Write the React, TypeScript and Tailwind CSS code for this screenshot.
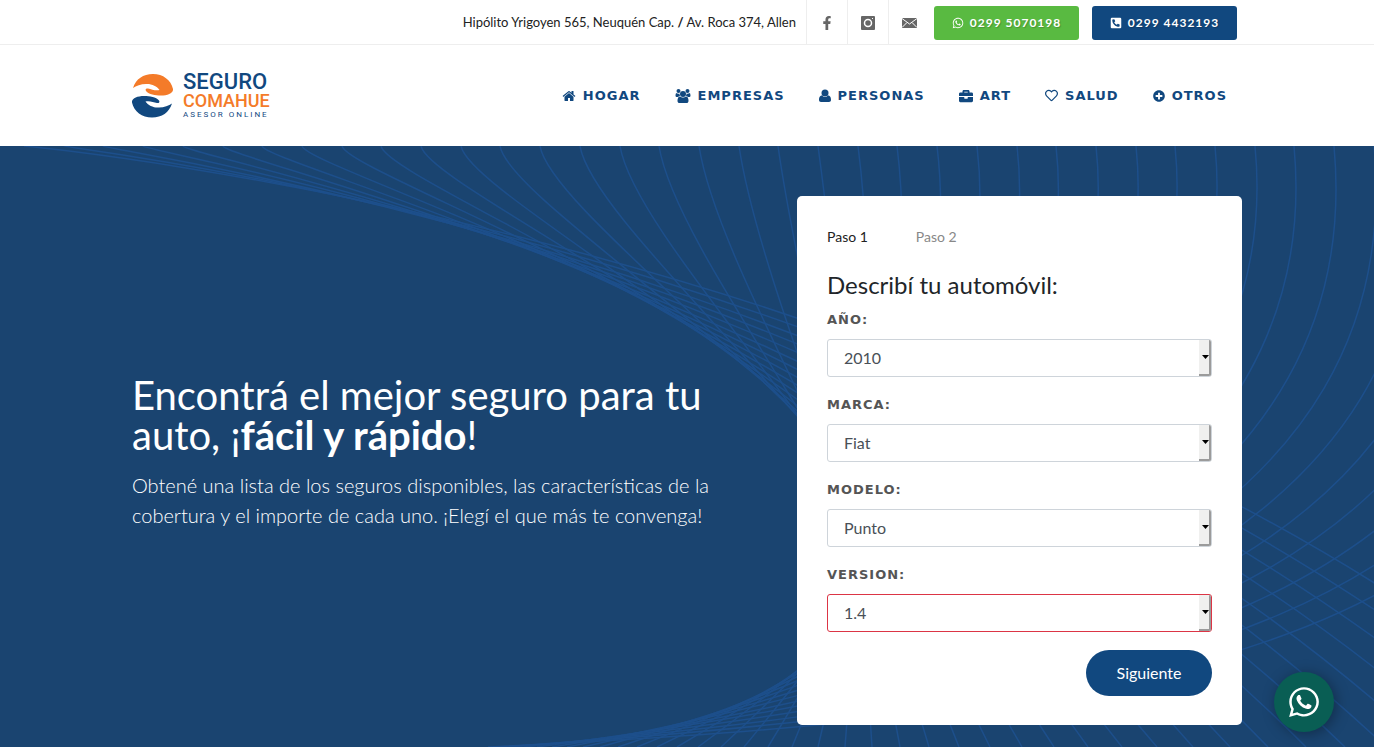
import { useState } from "react";
import type { ReactNode } from "react";
import { FaBriefcase, FaFacebookF, FaPhoneSquareAlt, FaPlusCircle, FaRegHeart, FaWhatsapp } from "react-icons/fa";

type Campo = "anio" | "marca" | "modelo" | "version";

type CampoProps = {
    id: Campo;
    label: string;
    value: string;
    opciones: string[];
    invalido?: boolean;
    onChange: (campo: Campo, valor: string) => void;
};

const OPCIONES: Record<Campo, string[]> = {
    anio: ["2010", "2011", "2012"],
    marca: ["Fiat", "Ford", "Renault"],
    modelo: ["Punto", "Palio", "Uno"],
    version: ["1.4", "1.6", "1.8"],
};

const CURVAS = Array.from({ length: 41 }, (_, i) => {
    const x = 24 + Math.round(39.7 * i);
    const y1 = Math.round(2 * i + 0.27 * i * i);
    const x2 = Math.round(1000 - 17.5 * i + 0.52 * i * i);
    const y2 = Math.round(89 + 16 * i - 0.1 * i * i);
    const x3 = Math.round(1600 - 45 * i + 0.43 * i * i);
    return `M${x} 0C${x + i} ${y1} ${x2} ${y2} ${x3} 601`;
});

function IconoHome() {
    return (
        <svg viewBox="0 0 1792 1792" className="h-[14px] w-[14px]" fill="currentColor" aria-hidden="true">
            <path d="M1472 992v480q0 26-19 45t-45 19h-384v-384h-256v384h-384q-26 0-45-19t-19-45v-480q0-1 .5-3t.5-3l575-474 575 474q1 2 1 6zm223-69l-62 74q-8 9-21 11h-3q-13 0-21-7l-692-577-692 577q-12 8-24 7-13-2-21-11l-62-74q-8-10-7-23.5t11-21.5l719-599q32-26 76-26t76 26l244 204v-195q0-14 9-23t23-9h192q14 0 23 9t9 23v408l219 182q10 8 11 21.5t-7 23.5z" />
        </svg>
    );
}

function IconoGrupo() {
    return (
        <svg viewBox="0 0 2048 1792" className="h-[14px] w-4" fill="currentColor" aria-hidden="true">
            <path d="M657 896q-162 5-265 128h-134q-82 0-138-40.5t-56-118.5q0-353 124-353 6 0 43.5 21t97.5 42.5 119 21.5q67 0 133-23-5 37-5 66 0 159 81 256z" />
            <path d="M1391 896q162 5 265 128h134q82 0 138-40.5t56-118.5q0-353-124-353-6 0-43.5 21t-97.5 42.5-119 21.5q-67 0-133-23 5 37 5 66 0 159-81 256z" />
            <path d="M1728 1533q0 120-73 189.5t-194 69.5h-874q-121 0-194-69.5t-73-189.5q0-53 3.5-103.5t14-109 26.5-108.5 43-97.5 62-81 85.5-53.5 111.5-20q10 0 43 21.5t73 48 107 48 135 21.5 135-21.5 107-48 73-48 43-21.5q61 0 111.5 20t85.5 53.5 62 81 43 97.5 26.5 108.5 14 109 3.5 103.5z" />
            <circle cx="448" cy="256" r="256" />
            <circle cx="1600" cy="256" r="256" />
            <circle cx="1024" cy="640" r="384" />
        </svg>
    );
}

// wider body than the stock user glyph
function IconoUsuario() {
    return (
        <svg viewBox="0 0 12 14" className="h-[14px] w-3" fill="currentColor" aria-hidden="true">
            <circle cx="6" cy="4" r="3.5" />
            <path d="M3 6.5Q6 9.5 9 6.5C11.5 6.5 12 9 12 11c0 1.3-.8 2-2 2H2c-1.2 0-2-.7-2-2 0-2 .5-4.5 3-4.5z" />
        </svg>
    );
}

function IconoInstagram() {
    return (
        <svg viewBox="0 0 14 14" className="h-[14px] w-[14px]" aria-hidden="true">
            <rect width="14" height="14" rx="1" fill="#666" />
            <circle cx="7" cy="7" r="3.5" fill="none" stroke="#fff" strokeWidth="1.5" />
            <rect x="11" y="2" width="1" height="1" fill="#fff" />
        </svg>
    );
}

function IconoMail() {
    return (
        <svg viewBox="0 0 15 10" className="h-[10px] w-[15px]" aria-hidden="true">
            <rect width="15" height="10" fill="#666" />
            <path d="M0 .5 7.5 6 15 .5M0 9.5 5 4.5M15 9.5 10 4.5" fill="none" stroke="#fff" strokeWidth="1" />
        </svg>
    );
}

const MENU: { nombre: string; icono: ReactNode }[] = [
    { nombre: "Hogar", icono: <IconoHome /> },
    { nombre: "Empresas", icono: <IconoGrupo /> },
    { nombre: "Personas", icono: <IconoUsuario /> },
    { nombre: "Art", icono: <FaBriefcase size={14} /> },
    { nombre: "Salud", icono: <FaRegHeart size={13} /> },
    { nombre: "Otros", icono: <FaPlusCircle size={12} /> },
];

function Logo() {
    return (
        <a href="#inicio" className="flex items-center gap-[10px]" aria-label="Seguro Comahue">
            <svg viewBox="0 0 41 44" className="h-11 w-[41px]" aria-hidden="true">
                <path
                    d="M1 14C4 5 11 0 21 0c10 0 18 6 20 15 .5 4-5 6.5-12 6.5-6 0-12-1-15-4.5-1-1.5 0-3 2-2.5 3.5 1 8 2.5 11.5 1.5C25 12 19 9.5 14 10 9 10 4 12 1 14z"
                    fill="#f47b29"
                />
                <path
                    d="M40 29.5C37 38.5 30 43.5 20 43.5 10 43.5 2 37.5 0 28.5-.5 24.5 5 22 12 22c6 0 12 1 15 4.5 1 1.5 0 3-2 2.5-3.5-1-8-2.5-11.5-1.5C16 31.5 22 34 27 33.5c5 0 10-2 13-4z"
                    fill="#11487f"
                />
            </svg>
            <span className="flex flex-col font-['Roboto'] font-medium">
                <span className="text-[22px] leading-[20px] text-[#11487f]">SEGURO</span>
                <span className="text-[18px] leading-[18px] text-[#f47b29]">COMAHUE</span>
                <span className="text-[8px] leading-[10px] font-normal tracking-[2px] text-[#11487f]">ASESOR ONLINE</span>
            </span>
        </a>
    );
}

function CampoSelect({ id, label, value, opciones, invalido = false, onChange }: CampoProps) {
    return (
        <div className="flex flex-col gap-[9px]">
            <label
                htmlFor={id}
                className="font-['DejaVu_Sans'] text-[13px] leading-5 font-bold tracking-[1px] text-[#555] uppercase"
            >
                {label}
            </label>
            <div className="relative">
                <select
                    id={id}
                    value={value}
                    onChange={(e) => onChange(id, e.target.value)}
                    className={
                        invalido
                            ? "block h-[38px] w-full appearance-none rounded-[3px] border border-[#dc3545] bg-white px-4 text-base text-[#495057]"
                            : "block h-[38px] w-full appearance-none rounded-[3px] border border-[#ced4da] bg-white px-4 text-base text-[#495057]"
                    }
                >
                    {opciones.map((opcion) => (
                        <option key={opcion} value={opcion}>
                            {opcion}
                        </option>
                    ))}
                </select>
                <span className="pointer-events-none absolute top-px right-px bottom-px flex w-3 items-center justify-end rounded-r-[2px] border-r-2 border-b-2 border-[#9b9b9b] bg-[#f0f0ef]">
                    <svg viewBox="0 0 7 4" className="h-1 w-[7px]" aria-hidden="true">
                        <path d="M0 0h7L3.5 4z" fill="#000" />
                    </svg>
                </span>
            </div>
        </div>
    );
}

export default function App() {
    const [form, setForm] = useState<Record<Campo, string>>({
        anio: "2010",
        marca: "Fiat",
        modelo: "Punto",
        version: "1.4",
    });

    const handleChange = (campo: Campo, valor: string) => {
        setForm((prev) => ({ ...prev, [campo]: valor }));
    };

    return (
        <div className="flex min-h-screen flex-col bg-white font-['Lato',sans-serif]">
            <div className="border-b border-[#eee]">
                <div className="mx-auto flex h-11 max-w-[1140px] items-center justify-end pr-5 pl-[15px]">
                    <p className="mr-[10px] text-[13px] leading-[22px] text-[#222]">
                        Hipólito Yrigoyen 565, Neuquén Cap. <strong>/</strong> Av. Roca 374, Allen
                    </p>
                    <a href="#facebook" aria-label="Facebook" className="flex h-full w-[41px] items-center justify-center border-l border-[#eee] pt-0.5 text-[#666]">
                        <FaFacebookF size={14} />
                    </a>
                    <a href="#instagram" aria-label="Instagram" className="flex h-full w-[41px] items-center justify-center border-l border-[#eee] pt-0.5">
                        <IconoInstagram />
                    </a>
                    <a href="#mail" aria-label="Mail" className="flex h-full w-[41px] items-center justify-center border-l border-[#eee] pt-0.5">
                        <IconoMail />
                    </a>
                    <a
                        href="tel:02995070198"
                        className="mb-1 ml-[5px] flex h-[34px] w-[145px] items-center justify-center gap-[6px] self-end rounded-[3px] bg-[#59ba41] text-xs font-bold tracking-[1px] text-white [text-shadow:1px_1px_1px_rgba(0,0,0,0.2)]"
                    >
                        <FaWhatsapp size={12} />
                        0299 5070198
                    </a>
                    <a
                        href="tel:02994432193"
                        className="mb-1 ml-[13px] flex h-[34px] w-[145px] items-center justify-center gap-[6px] self-end rounded-[3px] bg-[#11487f] text-xs font-bold tracking-[1px] text-white [text-shadow:1px_1px_1px_rgba(0,0,0,0.2)]"
                    >
                        <FaPhoneSquareAlt size={12} />
                        0299 4432193
                    </a>
                </div>
            </div>

            <header className="mx-auto flex h-[101px] w-full max-w-[1140px] items-center justify-between px-[15px]">
                <Logo />
                <nav className="mr-[15px] flex items-center gap-[34px]">
                    {MENU.map((item) => (
                        <a
                            key={item.nombre}
                            href={`#${item.nombre.toLowerCase()}`}
                            className="flex items-center gap-[7px] font-['DejaVu_Sans'] text-[13px] leading-[22px] font-bold tracking-[1px] text-[#11487f] uppercase"
                        >
                            {item.icono}
                            {item.nombre}
                        </a>
                    ))}
                </nav>
            </header>

            <main className="relative flex-1 overflow-hidden bg-[#1a4470]">
                <svg
                    viewBox="0 0 1374 601"
                    preserveAspectRatio="xMidYMid slice"
                    className="absolute inset-0 h-full w-full"
                    fill="none"
                    stroke="#1d4f8b"
                    strokeWidth="1.5"
                    aria-hidden="true"
                >
                    {CURVAS.map((d) => (
                        <path key={d} d={d} />
                    ))}
                </svg>

                <div className="relative mx-auto grid max-w-[1140px] grid-cols-12 items-center pt-[50px] pb-[22px]">
                    <div className="col-span-7 px-[15px] pb-4 text-white">
                        <h1 className="text-[40px] leading-10">
                            Encontrá el mejor seguro para tu auto, ¡<strong className="font-bold">fácil y rápido</strong>!
                        </h1>
                        <p className="mt-[15px] text-xl leading-[30px] font-light">
                            Obtené una lista de los seguros disponibles, las características de la cobertura y el
                            importe de cada uno. ¡Elegí el que más te convenga!
                        </p>
                    </div>

                    <div className="col-span-5 px-[15px]">
                        <form className="rounded-[5px] bg-white p-[30px] pb-[29px]" onSubmit={(e) => e.preventDefault()}>
                            <div className="flex gap-12 text-sm leading-[22px]">
                                <a href="#paso-1" className="text-[#222]">
                                    Paso 1
                                </a>
                                <a href="#paso-2" className="text-[#888]">
                                    Paso 2
                                </a>
                            </div>
                            <h2 className="mt-[19px] text-2xl leading-9 text-[#212529]">Describí tu automóvil:</h2>
                            <div className="mt-[7px] flex flex-col gap-[18px]">
                                <CampoSelect id="anio" label="Año:" value={form.anio} opciones={OPCIONES.anio} onChange={handleChange} />
                                <CampoSelect id="marca" label="Marca:" value={form.marca} opciones={OPCIONES.marca} onChange={handleChange} />
                                <CampoSelect id="modelo" label="Modelo:" value={form.modelo} opciones={OPCIONES.modelo} onChange={handleChange} />
                                <CampoSelect id="version" label="Version:" value={form.version} opciones={OPCIONES.version} invalido onChange={handleChange} />
                                <button type="submit" className="h-[46px] w-[126px] self-end rounded-full bg-[#11487f] text-base text-white">
                                    Siguiente
                                </button>
                            </div>
                        </form>
                    </div>
                </div>
            </main>

            <a
                href="#whatsapp"
                aria-label="WhatsApp"
                className="fixed right-10 bottom-[15px] flex h-[60px] w-[60px] items-center justify-center rounded-full bg-[#095e54] text-white shadow-[2px_2px_14px_rgba(0,0,0,0.35)]"
            >
                <FaWhatsapp size={34} />
            </a>
        </div>
    );
}
